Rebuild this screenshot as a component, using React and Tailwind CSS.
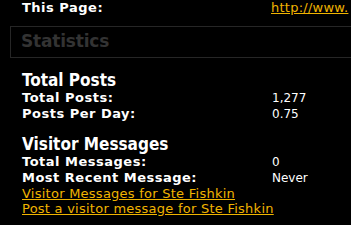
import React from 'react';

const rows1 = [
  ['Total Posts:', '1,277'],
  ['Posts Per Day:', '0.75'],
];

const rows2 = [
  ['Total Messages:', '0'],
  ['Most Recent Message:', 'Never'],
];

const Row = ({ label, value }) => (
  <div className="flex leading-[16px]">
    <div className="w-[250px] shrink-0 text-[13px] font-bold tracking-[0.5px]">{label}</div>
    <div className="text-[12px]">{value}</div>
  </div>
);

const App = () => {
  return (
    <div
      className="w-[351px] h-[225px] overflow-hidden bg-black text-white"
      style={{ fontFamily: '"DejaVu Sans", Verdana, sans-serif' }}
    >
      <div className="flex pl-[22px] leading-[15px]">
        <div className="w-[249px] shrink-0 text-[13px] font-bold tracking-[0.5px]">This Page:</div>
        <a href="#" className="text-[13px] text-[#f0b400] underline whitespace-nowrap tracking-[0.25px]">http://www.</a>
      </div>

      <div className="ml-[10px] mt-[11px] w-[400px] h-[32px] border border-[#262626] flex items-center pl-[10px]">
        <span className="text-[17px] font-bold text-[#333333] tracking-[-0.2px]">Statistics</span>
      </div>

      <div className="pl-[22px] pt-[12px]">
        <div
          className="text-[17px] font-bold leading-[20px]"
          style={{ fontFamily: '"DejaVu Sans Condensed", Tahoma, sans-serif' }}
        >
          Total Posts
        </div>
        {rows1.map(([l, v]) => (
          <Row key={l} label={l} value={v} />
        ))}

        <div
          className="mt-[12px] text-[17px] font-bold leading-[20px]"
          style={{ fontFamily: '"DejaVu Sans Condensed", Tahoma, sans-serif' }}
        >
          Visitor Messages
        </div>
        {rows2.map(([l, v]) => (
          <Row key={l} label={l} value={v} />
        ))}
        <div className="flex flex-col items-start text-[13px] leading-[15px] tracking-[0.25px]">
          <a href="#" className="text-[#f0b400] underline">Visitor Messages for Ste Fishkin</a>
          <a href="#" className="text-[#f0b400] underline">Post a visitor message for Ste Fishkin</a>
        </div>
      </div>
    </div>
  );
};

export default App;
